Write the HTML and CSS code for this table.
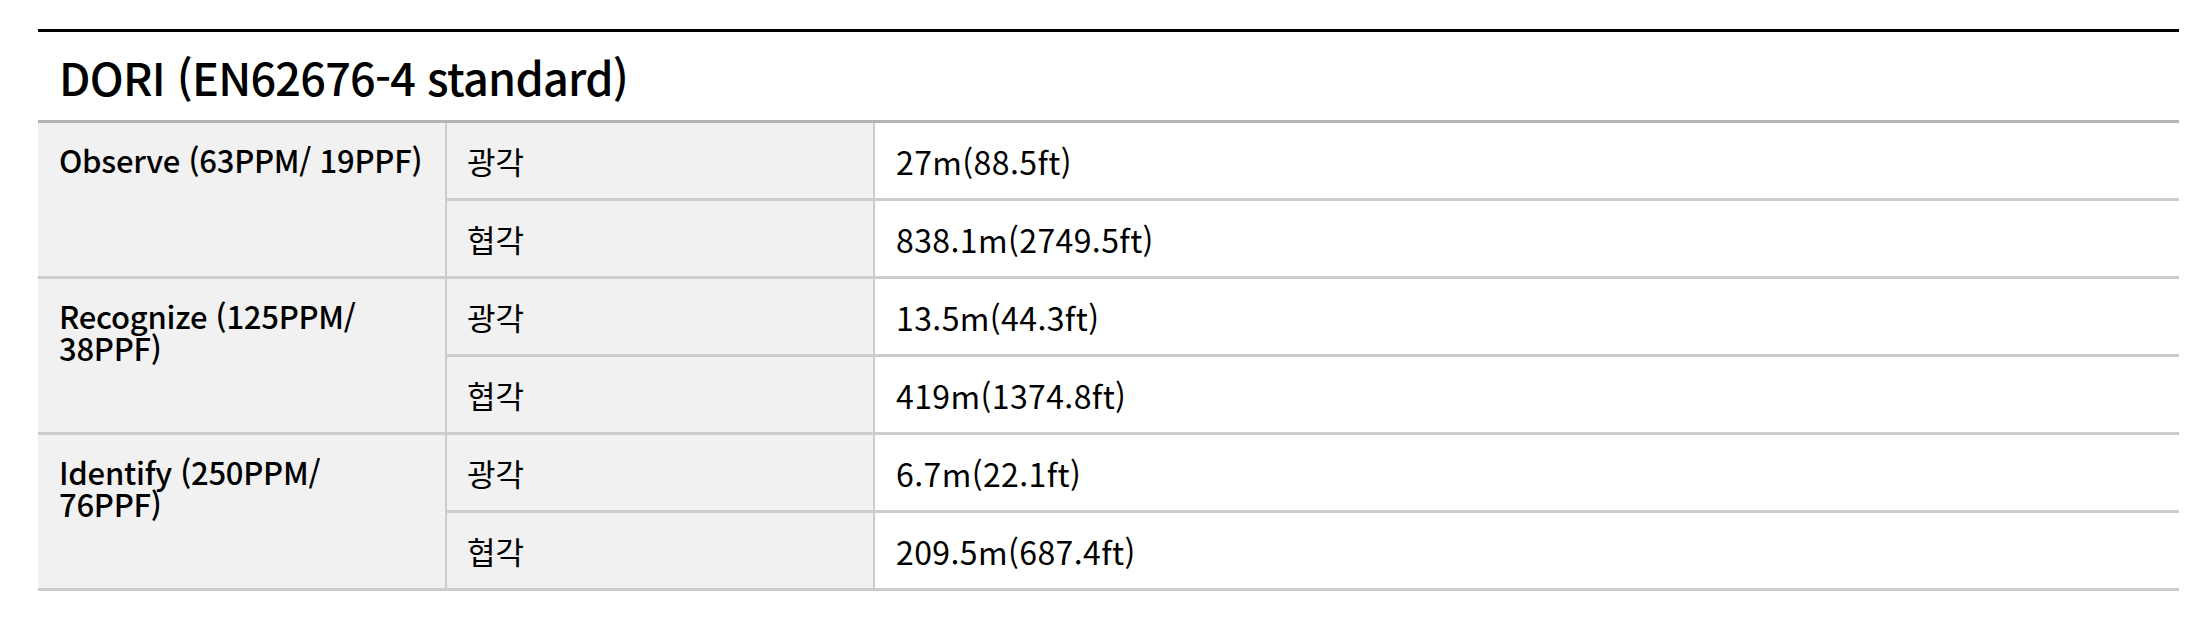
FILE: index.html
```html
<!DOCTYPE html>
<html lang="ko">
<head>
<meta charset="utf-8">
<title>DORI</title>
<link rel="stylesheet" href="styles.css">
</head>
<body>
<section class="spec">
  <h2 class="spec-title">DORI (EN62676-4 standard)</h2>
  <div class="spec-grid">
    <div class="cell label span2">Observe (63PPM/ 19PPF)</div>
    <div class="cell sub">광각</div>
    <div class="cell value">27m(88.5ft)</div>
    <div class="cell sub">협각</div>
    <div class="cell value">838.1m(2749.5ft)</div>

    <div class="cell label span2">Recognize (125PPM/ 38PPF)</div>
    <div class="cell sub">광각</div>
    <div class="cell value">13.5m(44.3ft)</div>
    <div class="cell sub">협각</div>
    <div class="cell value">419m(1374.8ft)</div>

    <div class="cell label span2">Identify (250PPM/ 76PPF)</div>
    <div class="cell sub">광각</div>
    <div class="cell value">6.7m(22.1ft)</div>
    <div class="cell sub">협각</div>
    <div class="cell value">209.5m(687.4ft)</div>
  </div>
</section>
</body>
</html>
```

FILE: styles.css
```css
html, body {
  margin: 0;
  padding: 0;
  background: #ffffff;
}

body {
  font-family: "Noto Sans CJK KR", "Noto Sans", sans-serif;
  color: #000;
}

.spec {
  margin: 29px 0 0 38px;
  width: 2141px;
}

.spec-title {
  margin: 0;
  height: 88px;
  border-top: 3px solid #000;
  display: flex;
  align-items: center;
  padding-left: 21px;
  font-size: 45px;
  font-weight: 500;
  letter-spacing: -0.75px;
}

.spec-grid {
  display: grid;
  grid-template-columns: 407px 426px 1fr;
  grid-auto-rows: 75px;
  column-gap: 2px;
  row-gap: 3px;
  background: #cccccc;
  border-top: 3px solid #b4b4b4;
  padding-bottom: 3px;
}

.cell {
  padding: 0 21px;
  font-size: 31px;
  line-height: 32px;
  display: flex;
  align-items: center;
}

.label {
  background: #f1f1f1;
  grid-row: span 2;
  align-items: flex-start;
  padding-top: 21px;
  font-weight: 500;
  letter-spacing: -0.25px;
}

.sub {
  background: #f1f1f1;
  padding-left: 20px;
}

.value {
  background: #ffffff;
  font-size: 32px;
  letter-spacing: 0.4px;
}
```
